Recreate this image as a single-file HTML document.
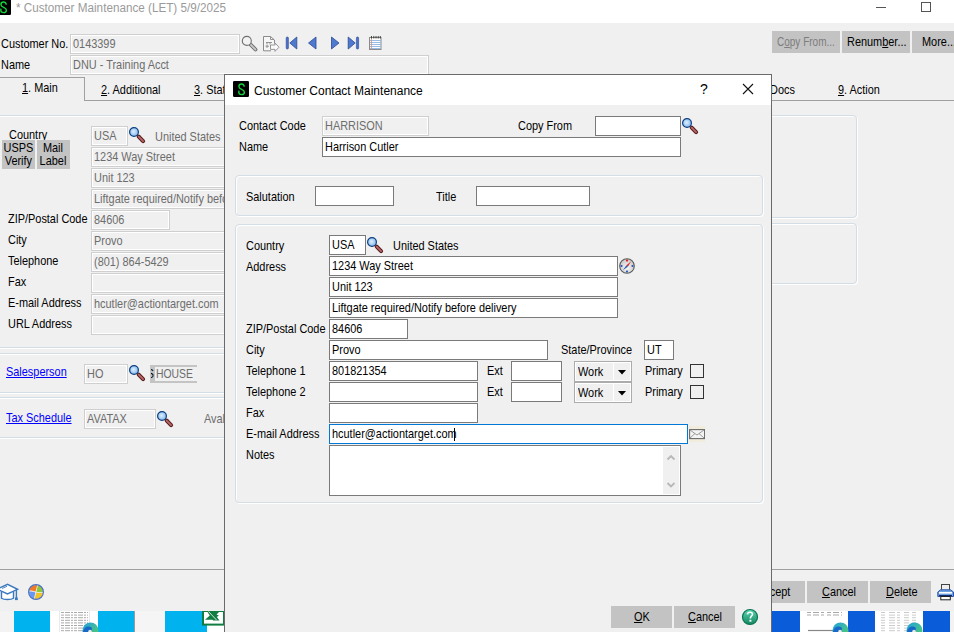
<!DOCTYPE html><html><head><meta charset="utf-8"><style>
html,body{margin:0;padding:0}
body{width:954px;height:632px;overflow:hidden;background:#f0f0f0;position:relative;font-family:"Liberation Sans",sans-serif;font-size:12px;color:#000}
.a{position:absolute;box-sizing:border-box}
.t{position:absolute;white-space:nowrap;line-height:14px;font-size:13px;transform-origin:0 0;transform:scaleX(.84)}
.g{color:#6d6d6d}
.lk{color:#0000ff;text-decoration:underline}
.btn{background:#c3c3c3}
u{text-decoration:underline}
</style></head><body>
<div class="a" style="left:0px;top:0px;width:954px;height:23px;background:#fff"></div>
<svg class="a" style="left:-5px;top:-1px" width="16" height="16" viewBox="0 0 16 16"><rect x="0" y="0" width="16" height="16" rx="1.2" fill="#000"/><path d="M11.2 5.7 C11.2 3.9 10.1 3 8.6 3 C7 3 5.9 4 5.9 5.5 C5.9 7 7.1 7.7 8.6 8.3 C10.3 9 11.4 9.8 11.4 11.2 C11.4 12.8 10.2 13.6 8.6 13.6 C7 13.6 5.8 12.7 5.8 11.3 C5.8 10.6 5.9 10.1 6.2 9.7" fill="none" stroke="#12d43c" stroke-width="1.4"/></svg>
<div class="t " style="left:16px;top:0.5px;color:#9a9a9a;transform:scaleX(.975);font-size:12px">* Customer Maintenance (LET) 5/9/2025</div>
<div class="a" style="left:876px;top:7px;width:10px;height:1px;background:#555"></div>
<div class="a" style="left:921px;top:2px;width:10px;height:10px;border:1px solid #555"></div>
<div class="t " style="left:1px;top:36.5px;">Customer No.</div>
<div class="a" style="left:70px;top:34px;width:170px;height:20px;background:#f0f0f0;border:1px solid #cfcfcf;box-shadow:inset 0 0 0 1px #fff"></div>
<div class="t g" style="left:73px;top:36.5px;">0143399</div>
<div class="t " style="left:1px;top:57.5px;">Name</div>
<div class="a" style="left:70px;top:55px;width:359px;height:20px;background:#f0f0f0;border:1px solid #cfcfcf;box-shadow:inset 0 0 0 1px #fff"></div>
<div class="t g" style="left:73px;top:57.5px;">DNU - Training Acct</div>
<svg class="a" style="left:240px;top:34px" width="19" height="19" viewBox="0 0 19 19"><line x1="10.5" y1="10.5" x2="15.5" y2="15.5" stroke="#6a6a6a" stroke-width="3.8" stroke-linecap="round"/><line x1="10.5" y1="10.5" x2="15.5" y2="15.5" stroke="#c8c8c8" stroke-width="1.8" stroke-linecap="round"/><circle cx="6.8" cy="6.9" r="4.5" fill="#f2f2f2" stroke="#707070" stroke-width="1.1"/></svg>
<svg class="a" style="left:262px;top:35px" width="19" height="18" viewBox="0 0 19 18"><path d="M1.5 1.5 H8.5 L12.5 5 V15.8 H1.5 Z" fill="#f6f6f6"/><path d="M12.5 8.5 V5 L8.5 1.5 H1.5 V15.8 H9" fill="none" stroke="#8a8a8a" stroke-width="1"/><path d="M8.5 1.5 V4.5 H12" fill="none" stroke="#8a8a8a" stroke-width="0.9"/><path d="M4 7.5 H10 M5 7.5 V9.5 M8 7.5 V9.5 M3.5 11.2 H7 M5 10 V13" stroke="#8a8a8a" stroke-width="0.9"/><path d="M8.5 10 H13 V8 L17 12.2 L13 16.4 V14.4 H8.5 Z" fill="#fafafa" stroke="#8a8a8a" stroke-width="0.9"/></svg>
<svg class="a" style="left:285px;top:36px" width="14" height="14" viewBox="0 0 14 14"><rect x="1.2" y="1" width="2.2" height="12" rx="1" fill="#4a70c8" stroke="#2a4a94" stroke-width="0.6"/><path d="M11.8 1 L4.8 7 L11.8 13 Z" fill="#4f78cf" stroke="#2a4a94" stroke-width="0.8"/></svg>
<svg class="a" style="left:307px;top:36px" width="11" height="14" viewBox="0 0 11 14"><path d="M9 1 L1.5 7 L9 13 Z" fill="#4f78cf" stroke="#2a4a94" stroke-width="0.8"/></svg>
<svg class="a" style="left:330px;top:36px" width="11" height="14" viewBox="0 0 11 14"><path d="M1.5 1 L9 7 L1.5 13 Z" fill="#4f78cf" stroke="#2a4a94" stroke-width="0.8"/></svg>
<svg class="a" style="left:347px;top:36px" width="14" height="14" viewBox="0 0 14 14"><path d="M1.2 1 L8.2 7 L1.2 13 Z" fill="#4f78cf" stroke="#2a4a94" stroke-width="0.8"/><rect x="9.4" y="1" width="2.2" height="12" rx="1" fill="#4a70c8" stroke="#2a4a94" stroke-width="0.6"/></svg>
<svg class="a" style="left:369px;top:36px" width="13" height="14" viewBox="0 0 13 14"><rect x="0.5" y="1.5" width="11.5" height="12" fill="#fff" stroke="#8a8a8a"/><path d="M1 4.5 H12 M1 6.5 H12 M1 8.5 H12 M1 10.5 H12 M1 12.5 H12" stroke="#8fb4e0" stroke-width="0.9"/><path d="M2.5 1.5 V13.5" stroke="#e09080" stroke-width="0.8"/><path d="M2.5 0 V2.5 M4.8 0 V2.5 M7 0 V2.5 M9.2 0 V2.5 M11.3 0 V2.5" stroke="#333" stroke-width="0.9"/></svg>
<div class="a btn " style="left:772px;top:31px;width:68px;height:22px;"></div>
<div class="t " style="left:777px;top:34.5px;color:#7d7d7d;transform:scaleX(.77)">C<u>o</u>py From...</div>
<div class="a btn " style="left:842px;top:31px;width:68px;height:22px;"></div>
<div class="t " style="left:847px;top:34.5px;">Renum<u>b</u>er...</div>
<div class="a btn " style="left:912px;top:31px;width:50px;height:22px;"></div>
<div class="t " style="left:922px;top:34.5px;">More...</div>
<div class="a" style="left:0px;top:77px;width:85px;height:24px;border-top:1px solid #a0a0a0;border-right:1px solid #a0a0a0"></div>
<div class="a" style="left:84px;top:100px;width:870px;height:1px;background:#a0a0a0"></div>
<div class="t " style="left:22px;top:80.5px;"><u>1</u>. Main</div>
<div class="t " style="left:101px;top:82.5px;"><u>2</u>. Additional</div>
<div class="t " style="left:194px;top:82.5px;"><u>3</u>. Statistics</div>
<div class="t " style="left:770px;top:82.5px;">Docs</div>
<div class="t " style="left:838px;top:82.5px;"><u>9</u>. Action</div>
<div class="a" style="left:-4px;top:115px;width:480px;height:233px;border:1px solid #d3dde6;border-radius:4px;box-shadow:inset 1px 1px 0 #fff,1px 1px 0 #fff"></div>
<div class="a" style="left:-4px;top:353px;width:480px;height:40px;border:1px solid #d3dde6;border-radius:4px;box-shadow:inset 1px 1px 0 #fff,1px 1px 0 #fff"></div>
<div class="a" style="left:-4px;top:397px;width:480px;height:41px;border:1px solid #d3dde6;border-radius:4px;box-shadow:inset 1px 1px 0 #fff,1px 1px 0 #fff"></div>
<div class="a" style="left:480px;top:115px;width:377px;height:103px;border:1px solid #d3dde6;border-radius:4px;box-shadow:inset 1px 1px 0 #fff,1px 1px 0 #fff"></div>
<div class="a" style="left:480px;top:223px;width:377px;height:61px;border:1px solid #d3dde6;border-radius:4px;box-shadow:inset 1px 1px 0 #fff,1px 1px 0 #fff"></div>
<div class="t " style="left:9px;top:127.5px;">Country</div>
<div class="a" style="left:91px;top:126px;width:37px;height:20px;background:#f0f0f0;border:1px solid #cfcfcf;box-shadow:inset 0 0 0 1px #fff"></div>
<div class="t g" style="left:94px;top:128.5px;">USA</div>
<svg class="a" style="left:129px;top:127px" width="17" height="17" viewBox="0 0 17 17"><defs><radialGradient id="lg1" cx="0.45" cy="0.45" r="0.6"><stop offset="0" stop-color="#dcefff"/><stop offset="1" stop-color="#7fb4ea"/></radialGradient></defs><line x1="9.7" y1="9.7" x2="14.1" y2="14.1" stroke="#5a1c1c" stroke-width="4" stroke-linecap="round"/><line x1="9.7" y1="9.7" x2="14.1" y2="14.1" stroke="#b86a6a" stroke-width="1.8" stroke-linecap="round"/><circle cx="5" cy="5" r="4.4" fill="url(#lg1)" stroke="#0d3f80" stroke-width="1.2"/></svg>
<div class="t g" style="left:155px;top:129.5px;">United States</div>
<div class="a btn " style="left:2px;top:140px;width:33px;height:29px;"></div>
<div class="t" style="left:2px;top:141px;width:39px;text-align:center;line-height:13px">USPS<br>Verify</div>
<div class="a btn " style="left:37px;top:140px;width:33px;height:29px;"></div>
<div class="t" style="left:37px;top:141px;width:38px;text-align:center;line-height:13px">Mail<br>Label</div>
<div class="a" style="left:91px;top:147px;width:300px;height:20px;background:#f0f0f0;border:1px solid #cfcfcf;box-shadow:inset 0 0 0 1px #fff"></div>
<div class="t g" style="left:94px;top:149.5px;">1234 Way Street</div>
<div class="a" style="left:91px;top:168px;width:300px;height:20px;background:#f0f0f0;border:1px solid #cfcfcf;box-shadow:inset 0 0 0 1px #fff"></div>
<div class="t g" style="left:94px;top:170.5px;">Unit 123</div>
<div class="a" style="left:91px;top:189px;width:300px;height:20px;background:#f0f0f0;border:1px solid #cfcfcf;box-shadow:inset 0 0 0 1px #fff"></div>
<div class="t g" style="left:94px;top:191.5px;">Liftgate required/Notify before delivery</div>
<div class="t " style="left:8px;top:211.5px;">ZIP/Postal Code</div>
<div class="a" style="left:91px;top:210px;width:79px;height:20px;background:#f0f0f0;border:1px solid #cfcfcf;box-shadow:inset 0 0 0 1px #fff"></div>
<div class="t g" style="left:94px;top:212.5px;">84606</div>
<div class="t " style="left:8px;top:232.5px;">City</div>
<div class="a" style="left:91px;top:231px;width:300px;height:20px;background:#f0f0f0;border:1px solid #cfcfcf;box-shadow:inset 0 0 0 1px #fff"></div>
<div class="t g" style="left:94px;top:233.5px;">Provo</div>
<div class="t " style="left:8px;top:253.5px;">Telephone</div>
<div class="a" style="left:91px;top:252px;width:300px;height:20px;background:#f0f0f0;border:1px solid #cfcfcf;box-shadow:inset 0 0 0 1px #fff"></div>
<div class="t g" style="left:94px;top:254.5px;">(801) 864-5429</div>
<div class="t " style="left:8px;top:274.5px;">Fax</div>
<div class="a" style="left:91px;top:273px;width:300px;height:20px;background:#f0f0f0;border:1px solid #cfcfcf;box-shadow:inset 0 0 0 1px #fff"></div>
<div class="t " style="left:8px;top:295.5px;">E-mail Address</div>
<div class="a" style="left:91px;top:294px;width:300px;height:20px;background:#f0f0f0;border:1px solid #cfcfcf;box-shadow:inset 0 0 0 1px #fff"></div>
<div class="t g" style="left:94px;top:296.5px;">hcutler@actiontarget.com</div>
<div class="t " style="left:8px;top:316.5px;">URL Address</div>
<div class="a" style="left:91px;top:315px;width:300px;height:20px;background:#f0f0f0;border:1px solid #cfcfcf;box-shadow:inset 0 0 0 1px #fff"></div>
<div class="t lk" style="left:6px;top:364.5px;">Salesperson</div>
<div class="a" style="left:84px;top:364px;width:44px;height:20px;background:#f0f0f0;border:1px solid #cfcfcf;box-shadow:inset 0 0 0 1px #fff"></div>
<div class="t g" style="left:87px;top:366.5px;">HO</div>
<svg class="a" style="left:129px;top:365px" width="17" height="17" viewBox="0 0 17 17"><defs><radialGradient id="lg2" cx="0.45" cy="0.45" r="0.6"><stop offset="0" stop-color="#dcefff"/><stop offset="1" stop-color="#7fb4ea"/></radialGradient></defs><line x1="9.7" y1="9.7" x2="14.1" y2="14.1" stroke="#5a1c1c" stroke-width="4" stroke-linecap="round"/><line x1="9.7" y1="9.7" x2="14.1" y2="14.1" stroke="#b86a6a" stroke-width="1.8" stroke-linecap="round"/><circle cx="5" cy="5" r="4.4" fill="url(#lg2)" stroke="#0d3f80" stroke-width="1.2"/></svg>
<div class="a" style="left:150px;top:365px;width:47px;height:18px;background:#f0f0f0;border:2px solid #c4c4c4;border-right:0;border-left-width:5px"></div>
<div class="t g" style="left:156px;top:366.5px;transform:scaleX(.8)">HOUSE</div>
<div class="a" style="left:151px;top:367px;width:4px;height:13px;overflow:hidden"><div class="t" style="left:-4px;top:0px;color:#000;transform:scaleX(.8)">S</div></div>
<div class="t lk" style="left:6px;top:410.5px;">Tax Schedule</div>
<div class="a" style="left:84px;top:409px;width:72px;height:20px;background:#f0f0f0;border:1px solid #cfcfcf;box-shadow:inset 0 0 0 1px #fff"></div>
<div class="t g" style="left:87px;top:411.5px;">AVATAX</div>
<svg class="a" style="left:157px;top:411px" width="17" height="17" viewBox="0 0 17 17"><defs><radialGradient id="lg3" cx="0.45" cy="0.45" r="0.6"><stop offset="0" stop-color="#dcefff"/><stop offset="1" stop-color="#7fb4ea"/></radialGradient></defs><line x1="9.7" y1="9.7" x2="14.1" y2="14.1" stroke="#5a1c1c" stroke-width="4" stroke-linecap="round"/><line x1="9.7" y1="9.7" x2="14.1" y2="14.1" stroke="#b86a6a" stroke-width="1.8" stroke-linecap="round"/><circle cx="5" cy="5" r="4.4" fill="url(#lg3)" stroke="#0d3f80" stroke-width="1.2"/></svg>
<div class="t g" style="left:204px;top:411.5px;">Avalara</div>
<div class="a" style="left:0px;top:569px;width:954px;height:1px;background:#a0a0a0"></div>
<svg class="a" style="left:0;top:583px" width="20" height="18" viewBox="0 0 20 18"><path d="M1.5 9 V15.2 C4 17 11 17 13.5 15.2 V8.5" fill="#fff" stroke="#3a78bf" stroke-width="1.4"/><path d="M-3 6 L7.5 1.3 L17.6 6.3 L7.5 11 Z" fill="#fff" stroke="#3a78bf" stroke-width="1.4"/><path d="M2 5.5 L7 3.3" stroke="#3a78bf" stroke-width="0.9"/><path d="M16.4 6.5 V15" stroke="#3a78bf" stroke-width="1.4"/><rect x="15" y="14.5" width="2.8" height="2.6" fill="#3a78bf"/></svg>
<svg class="a" style="left:28px;top:584px" width="17" height="17" viewBox="0 0 17 17"><defs><clipPath id="oc"><circle cx="8" cy="8" r="7"/></clipPath></defs><circle cx="8" cy="8" r="7" fill="#f4f4f4"/><g clip-path="url(#oc)"><path d="M0 7 C2.5 6 4.5 6.8 7.5 7.6 L9.6 0 H0 Z" fill="#f27a24"/><path d="M10.3 0 L8.3 7.8 C10.5 8.4 13 8.6 16 7.6 V0 Z" fill="#8cc83a"/><path d="M0 7.8 C2.5 7 4.5 7.6 7.4 8.4 L5.6 16 H0 Z" fill="#6a98f0"/><path d="M8.2 8.6 C10.5 9.2 13 9.4 16 8.4 V16 H6.4 Z" fill="#f2c22a"/></g><circle cx="8" cy="8" r="7.4" fill="none" stroke="#4a70c0" stroke-width="1.2"/></svg>
<div class="a btn " style="left:745px;top:581px;width:60px;height:22px;"></div>
<div class="t " style="left:757px;top:584.5px;">Accept</div>
<div class="a btn " style="left:807px;top:581px;width:61px;height:22px;"></div>
<div class="t " style="left:822px;top:584.5px;"><u>C</u>ancel</div>
<div class="a btn " style="left:870px;top:581px;width:61px;height:22px;"></div>
<div class="t " style="left:886px;top:584.5px;"><u>D</u>elete</div>
<svg class="a" style="left:937px;top:583px" width="17" height="18" viewBox="0 0 17 18"><rect x="4.5" y="1.5" width="8" height="6" fill="#eee" stroke="#444" stroke-width="1"/><path d="M0.8 9 L3.5 6.8 H13.5 L16.5 9 V13.5 H0.8 Z" fill="#6fa0e0" stroke="#2c56a8" stroke-width="1"/><rect x="2" y="9" width="13" height="1.6" fill="#fff"/><rect x="2" y="12" width="13" height="1.2" fill="#102a70"/><rect x="3.8" y="13.5" width="9.5" height="3.3" fill="#fff" stroke="#222" stroke-width="1"/></svg>
<div class="a" style="left:0px;top:611px;width:954px;height:21px;background:#f3f3f3"></div>
<div class="a" style="left:14px;top:611px;width:36px;height:21px;background:#00b2ee"></div>
<div class="a" style="left:50px;top:611px;width:48px;height:21px;background:#fff"></div>
<div class="a" style="left:98px;top:611px;width:36px;height:21px;background:#00b2ee"></div>
<div class="a" style="left:134px;top:611px;width:31px;height:21px;background:#f5f5f5;border-left:1px solid #9a9a9a"></div>
<div class="a" style="left:165px;top:611px;width:43px;height:21px;background:#00b2ee"></div>
<div class="a" style="left:207px;top:625px;width:17px;height:7px;background:#fff"></div>
<svg class="a" style="left:50px;top:611px" width="48" height="21" viewBox="0 0 48 21"><path d="M9.5 0 V21 M39.5 0 V21" stroke="#e4e4e4" stroke-width="0.8"/><path d="M11 1.5 H38" stroke="#a0a0a0" stroke-width="0.9" stroke-dasharray="3 1 5 1 2 1"/><path d="M11 4.1 H38" stroke="#a0a0a0" stroke-width="0.9" stroke-dasharray="3 1 5 1 2 1"/><path d="M11 6.7 H38" stroke="#a0a0a0" stroke-width="0.9" stroke-dasharray="3 1 5 1 2 1"/><path d="M11 9.3 H38" stroke="#a0a0a0" stroke-width="0.9" stroke-dasharray="3 1 5 1 2 1"/><path d="M11 11.9 H38" stroke="#a0a0a0" stroke-width="0.9" stroke-dasharray="3 1 5 1 2 1"/><path d="M11 14.5 H38" stroke="#a0a0a0" stroke-width="0.9" stroke-dasharray="3 1 5 1 2 1"/><path d="M11 17.1 H38" stroke="#a0a0a0" stroke-width="0.9" stroke-dasharray="3 1 5 1 2 1"/><path d="M11 19.7 H38" stroke="#a0a0a0" stroke-width="0.9" stroke-dasharray="3 1 5 1 2 1"/></svg>
<svg class="a" style="left:82px;top:622px" width="17" height="10" viewBox="0 0 17 10"><defs><linearGradient id="eg1" x1="0" y1="0" x2="1" y2="1"><stop offset="0" stop-color="#1fa0e8"/><stop offset="1" stop-color="#5bd25a"/></linearGradient></defs><circle cx="8.5" cy="8.5" r="8" fill="url(#eg1)"/><path d="M1 10 C1.5 5 6 3.5 9 5 C10.5 6 10 8 9 9 L9 10 Z" fill="#1769c8"/><circle cx="8" cy="9.5" r="1.8" fill="#e8e8e8"/></svg>
<svg class="a" style="left:202px;top:611px" width="23" height="15" viewBox="0 0 23 15"><rect x="1" y="0" width="21" height="13.6" fill="#fff" stroke="#107c41" stroke-width="2"/><path d="M3 8.8 L7.8 4.5 L5.5 1 H17 L14.5 3.6 L16.8 4.5 L14.8 6 L17.5 9.5 H11 L10.5 8.8 Z" fill="#107c41"/><path d="M6.5 0.5 L14.5 9" stroke="#fff" stroke-width="0.8"/></svg>
<div class="a" style="left:772px;top:611px;width:28px;height:21px;background:#0a5cd8"></div>
<div class="a" style="left:800px;top:611px;width:48px;height:21px;background:#fff"></div>
<div class="a" style="left:848px;top:611px;width:27px;height:21px;background:#0a5cd8"></div>
<div class="a" style="left:875px;top:611px;width:48px;height:21px;background:#fff"></div>
<div class="a" style="left:923px;top:611px;width:27px;height:21px;background:#0a5cd8"></div>
<svg class="a" style="left:800px;top:611px" width="48" height="21" viewBox="0 0 48 21"><path d="M7 1.5 H42 M7 4 H42" stroke="#a0a0a0" stroke-width="0.9" stroke-dasharray="4 2 6 2 3 3"/><path d="M8 19.5 H33" stroke="#888" stroke-width="1.2"/></svg>
<svg class="a" style="left:875px;top:611px" width="48" height="21" viewBox="0 0 48 21"><path d="M6 1.5 H42" stroke="#a8a8a8" stroke-width="0.6" stroke-dasharray="4 4 6 2 3 4 5 3"/><path d="M6 4.1 H42" stroke="#a8a8a8" stroke-width="0.6" stroke-dasharray="4 4 6 2 3 4 5 3"/><path d="M6 6.7 H42" stroke="#a8a8a8" stroke-width="0.6" stroke-dasharray="4 4 6 2 3 4 5 3"/><path d="M6 9.3 H42" stroke="#a8a8a8" stroke-width="0.6" stroke-dasharray="4 4 6 2 3 4 5 3"/><path d="M6 11.9 H42" stroke="#a8a8a8" stroke-width="0.6" stroke-dasharray="4 4 6 2 3 4 5 3"/><path d="M6 14.5 H42" stroke="#a8a8a8" stroke-width="0.6" stroke-dasharray="4 4 6 2 3 4 5 3"/><path d="M6 17.1 H42" stroke="#a8a8a8" stroke-width="0.6" stroke-dasharray="4 4 6 2 3 4 5 3"/><path d="M6 19.7 H42" stroke="#a8a8a8" stroke-width="0.6" stroke-dasharray="4 4 6 2 3 4 5 3"/></svg>
<svg class="a" style="left:832px;top:622px" width="17" height="10" viewBox="0 0 17 10"><defs><linearGradient id="eg2" x1="0" y1="0" x2="1" y2="1"><stop offset="0" stop-color="#1fa0e8"/><stop offset="1" stop-color="#5bd25a"/></linearGradient></defs><circle cx="8.5" cy="8.5" r="8" fill="url(#eg2)"/><path d="M1 10 C1.5 5 6 3.5 9 5 C10.5 6 10 8 9 9 L9 10 Z" fill="#1769c8"/><circle cx="8" cy="9.5" r="1.8" fill="#e8e8e8"/></svg>
<svg class="a" style="left:906px;top:622px" width="17" height="10" viewBox="0 0 17 10"><defs><linearGradient id="eg3" x1="0" y1="0" x2="1" y2="1"><stop offset="0" stop-color="#1fa0e8"/><stop offset="1" stop-color="#5bd25a"/></linearGradient></defs><circle cx="8.5" cy="8.5" r="8" fill="url(#eg3)"/><path d="M1 10 C1.5 5 6 3.5 9 5 C10.5 6 10 8 9 9 L9 10 Z" fill="#1769c8"/><circle cx="8" cy="9.5" r="1.8" fill="#e8e8e8"/></svg>
<div class="a" style="left:224px;top:74px;width:548px;height:600px;background:#f0f0f0;border:1px solid #6a6a6a"></div>
<div class="a" style="left:225px;top:75px;width:546px;height:30px;background:#fff"></div>
<svg class="a" style="left:233px;top:81px" width="16" height="16" viewBox="0 0 16 16"><rect x="0" y="0" width="16" height="16" rx="1.2" fill="#000"/><path d="M11.2 5.7 C11.2 3.9 10.1 3 8.6 3 C7 3 5.9 4 5.9 5.5 C5.9 7 7.1 7.7 8.6 8.3 C10.3 9 11.4 9.8 11.4 11.2 C11.4 12.8 10.2 13.6 8.6 13.6 C7 13.6 5.8 12.7 5.8 11.3 C5.8 10.6 5.9 10.1 6.2 9.7" fill="none" stroke="#12d43c" stroke-width="1.4"/></svg>
<div class="t " style="left:254px;top:83.5px;transform:none;font-size:12px">Customer Contact Maintenance</div>
<div class="t " style="left:700px;top:83.5px;transform:none;font-size:14px;top:82px">?</div>
<svg class="a" style="left:742px;top:83px" width="12" height="12" viewBox="0 0 12 12"><path d="M1 1 L11 11 M11 1 L1 11" stroke="#111" stroke-width="1.1"/></svg>
<div class="t " style="left:239px;top:118.5px;">Contact Code</div>
<div class="a" style="left:322px;top:116px;width:107px;height:20px;background:#f0f0f0;border:1px solid #cfcfcf;box-shadow:inset 0 0 0 1px #fff"></div>
<div class="t g" style="left:325px;top:118.5px;">HARRISON</div>
<div class="t " style="left:518px;top:118.5px;">Copy From</div>
<div class="a" style="left:595px;top:116px;width:86px;height:20px;background:#fff;border:1px solid #7a7a7a"></div>
<svg class="a" style="left:682px;top:118px" width="17" height="17" viewBox="0 0 17 17"><defs><radialGradient id="lg4" cx="0.45" cy="0.45" r="0.6"><stop offset="0" stop-color="#dcefff"/><stop offset="1" stop-color="#7fb4ea"/></radialGradient></defs><line x1="9.7" y1="9.7" x2="14.1" y2="14.1" stroke="#5a1c1c" stroke-width="4" stroke-linecap="round"/><line x1="9.7" y1="9.7" x2="14.1" y2="14.1" stroke="#b86a6a" stroke-width="1.8" stroke-linecap="round"/><circle cx="5" cy="5" r="4.4" fill="url(#lg4)" stroke="#0d3f80" stroke-width="1.2"/></svg>
<div class="t " style="left:239px;top:139.5px;">Name</div>
<div class="a" style="left:322px;top:137px;width:359px;height:20px;background:#fff;border:1px solid #7a7a7a"></div>
<div class="t " style="left:325px;top:139.5px;">Harrison Cutler</div>
<div class="a" style="left:235px;top:175px;width:528px;height:41px;border:1px solid #d3dde6;border-radius:4px;box-shadow:inset 1px 1px 0 #fff,1px 1px 0 #fff"></div>
<div class="t " style="left:246px;top:189.5px;">Salutation</div>
<div class="a" style="left:315px;top:186px;width:79px;height:20px;background:#fff;border:1px solid #7a7a7a"></div>
<div class="t " style="left:436px;top:189.5px;">Title</div>
<div class="a" style="left:476px;top:186px;width:114px;height:20px;background:#fff;border:1px solid #7a7a7a"></div>
<div class="a" style="left:235px;top:224px;width:528px;height:279px;border:1px solid #d3dde6;border-radius:4px;box-shadow:inset 1px 1px 0 #fff,1px 1px 0 #fff"></div>
<div class="t " style="left:246px;top:238.5px;">Country</div>
<div class="a" style="left:329px;top:235px;width:37px;height:20px;background:#fff;border:1px solid #7a7a7a"></div>
<div class="t " style="left:332px;top:237.5px;">USA</div>
<svg class="a" style="left:367px;top:237px" width="17" height="17" viewBox="0 0 17 17"><defs><radialGradient id="lg5" cx="0.45" cy="0.45" r="0.6"><stop offset="0" stop-color="#dcefff"/><stop offset="1" stop-color="#7fb4ea"/></radialGradient></defs><line x1="9.7" y1="9.7" x2="14.1" y2="14.1" stroke="#5a1c1c" stroke-width="4" stroke-linecap="round"/><line x1="9.7" y1="9.7" x2="14.1" y2="14.1" stroke="#b86a6a" stroke-width="1.8" stroke-linecap="round"/><circle cx="5" cy="5" r="4.4" fill="url(#lg5)" stroke="#0d3f80" stroke-width="1.2"/></svg>
<div class="t " style="left:393px;top:238.5px;">United States</div>
<div class="t " style="left:246px;top:259.5px;">Address</div>
<div class="a" style="left:329px;top:256px;width:289px;height:20px;background:#fff;border:1px solid #7a7a7a"></div>
<div class="t " style="left:332px;top:258.5px;">1234 Way Street</div>
<svg class="a" style="left:619px;top:258px" width="16" height="16" viewBox="0 0 16 16"><defs><radialGradient id="cg" cx="0.5" cy="0.6" r="0.6"><stop offset="0" stop-color="#f8f8f8"/><stop offset="1" stop-color="#c4c4c4"/></radialGradient></defs><circle cx="8" cy="8" r="7.3" fill="url(#cg)" stroke="#5a5a5a" stroke-width="1.1"/><rect x="7" y="1.6" width="2" height="1.8" fill="#e02020"/><rect x="7" y="12.6" width="2" height="1.8" fill="#2f5fb8"/><rect x="1.6" y="7" width="1.8" height="2" fill="#2f5fb8"/><rect x="12.6" y="7" width="1.8" height="2" fill="#2f5fb8"/><path d="M12 3.6 L8.9 8.7 L7.4 7.2 Z" fill="#e02828"/><path d="M3.8 12.3 L7.4 7.2 L8.9 8.7 Z" fill="#2f5fb8"/></svg>
<div class="a" style="left:329px;top:277px;width:289px;height:20px;background:#fff;border:1px solid #7a7a7a"></div>
<div class="t " style="left:332px;top:279.5px;">Unit 123</div>
<div class="a" style="left:329px;top:298px;width:289px;height:20px;background:#fff;border:1px solid #7a7a7a"></div>
<div class="t " style="left:332px;top:300.5px;">Liftgate required/Notify before delivery</div>
<div class="t " style="left:246px;top:321.5px;">ZIP/Postal Code</div>
<div class="a" style="left:329px;top:319px;width:79px;height:20px;background:#fff;border:1px solid #7a7a7a"></div>
<div class="t " style="left:332px;top:321.5px;">84606</div>
<div class="t " style="left:246px;top:342.5px;">City</div>
<div class="a" style="left:329px;top:340px;width:219px;height:20px;background:#fff;border:1px solid #7a7a7a"></div>
<div class="t " style="left:332px;top:342.5px;">Provo</div>
<div class="t " style="left:561px;top:342.5px;">State/Province</div>
<div class="a" style="left:644px;top:340px;width:30px;height:20px;background:#fff;border:1px solid #7a7a7a"></div>
<div class="t " style="left:647px;top:342.5px;">UT</div>
<div class="t " style="left:246px;top:363.5px;">Telephone 1</div>
<div class="a" style="left:329px;top:361px;width:149px;height:20px;background:#fff;border:1px solid #7a7a7a"></div>
<div class="t " style="left:332px;top:363.5px;">801821354</div>
<div class="t " style="left:487px;top:363.5px;">Ext</div>
<div class="a" style="left:511px;top:361px;width:51px;height:20px;background:#fff;border:1px solid #7a7a7a"></div>
<div class="a" style="left:574px;top:361px;width:58px;height:21px;background:#f0f0f0;border:1px solid #acacac;box-shadow:inset 0 0 0 1px #fff"></div>
<div class="a" style="left:613px;top:362px;width:1px;height:19px;background:#fff"></div>
<div class="t " style="left:578px;top:364.5px;">Work</div>
<svg class="a" style="left:618px;top:370px" width="9" height="5" viewBox="0 0 9 5"><path d="M0 0 H8 L4 4.5 Z" fill="#000"/></svg>
<div class="t " style="left:645px;top:363.5px;">Primary</div>
<div class="a" style="left:690px;top:364px;width:14px;height:14px;border:1px solid #333"></div>
<div class="t " style="left:246px;top:384.5px;">Telephone 2</div>
<div class="a" style="left:329px;top:382px;width:149px;height:20px;background:#fff;border:1px solid #7a7a7a"></div>
<div class="t " style="left:487px;top:384.5px;">Ext</div>
<div class="a" style="left:511px;top:382px;width:51px;height:20px;background:#fff;border:1px solid #7a7a7a"></div>
<div class="a" style="left:574px;top:382px;width:58px;height:21px;background:#f0f0f0;border:1px solid #acacac;box-shadow:inset 0 0 0 1px #fff"></div>
<div class="a" style="left:613px;top:383px;width:1px;height:19px;background:#fff"></div>
<div class="t " style="left:578px;top:385.5px;">Work</div>
<svg class="a" style="left:618px;top:391px" width="9" height="5" viewBox="0 0 9 5"><path d="M0 0 H8 L4 4.5 Z" fill="#000"/></svg>
<div class="t " style="left:645px;top:384.5px;">Primary</div>
<div class="a" style="left:690px;top:385px;width:14px;height:14px;border:1px solid #333"></div>
<div class="t " style="left:246px;top:405.5px;">Fax</div>
<div class="a" style="left:329px;top:403px;width:149px;height:20px;background:#fff;border:1px solid #7a7a7a"></div>
<div class="t " style="left:246px;top:426.5px;">E-mail Address</div>
<div class="a" style="left:329px;top:424px;width:359px;height:20px;background:#fff;border:1px solid #0078d7"></div>
<div class="t " style="left:332px;top:426.5px;">hcutler@actiontarget.com</div>
<div class="a" style="left:454px;top:428px;width:1px;height:13px;background:#000"></div>
<svg class="a" style="left:689px;top:426px" width="16" height="16" viewBox="0 0 16 16"><rect x="0" y="0" width="16" height="16" fill="#f1ecdc"/><rect x="0.6" y="3.6" width="15" height="9" fill="#f4f4f4" stroke="#6a6a6a" stroke-width="1.1"/><path d="M1 4 L8 9 L15 4 M1 12 L6 7.5 M15 12 L10 7.5" fill="none" stroke="#909090" stroke-width="0.9"/></svg>
<div class="t " style="left:246px;top:447.5px;">Notes</div>
<div class="a" style="left:329px;top:445px;width:352px;height:51px;background:#fff;border:1px solid #7a7a7a"></div>
<div class="a" style="left:663px;top:447px;width:16px;height:47px;background:#f0f0f0"></div>
<svg class="a" style="left:666px;top:453px" width="10" height="40" viewBox="0 0 10 40"><path d="M1.5 6.5 L5 3 L8.5 6.5 M1.5 30 L5 33.5 L8.5 30" fill="none" stroke="#b8b8b8" stroke-width="1.8"/></svg>
<div class="a btn " style="left:611px;top:606px;width:61px;height:22px;"></div>
<div class="t " style="left:634px;top:609.5px;"><u>O</u>K</div>
<div class="a btn " style="left:674px;top:606px;width:61px;height:22px;"></div>
<div class="t " style="left:688px;top:609.5px;"><u>C</u>ancel</div>
<svg class="a" style="left:741px;top:608px" width="18" height="18" viewBox="0 0 18 18"><defs><linearGradient id="hg" x1="0" y1="0" x2="0" y2="1"><stop offset="0" stop-color="#5ad6b2"/><stop offset="1" stop-color="#13865f"/></linearGradient></defs><circle cx="9" cy="9" r="7.5" fill="url(#hg)" stroke="#0b7452" stroke-width="1.2"/><path d="M6.4 6.4 C6.6 4.8 7.7 4.2 9 4.2 C10.5 4.2 11.5 5 11.5 6.3 C11.5 7.8 9.6 8.2 9.4 10 V10.6" fill="none" stroke="#fff" stroke-width="1.6"/><rect x="8.4" y="11.8" width="2" height="1.9" fill="#fff"/></svg>
</body></html>
